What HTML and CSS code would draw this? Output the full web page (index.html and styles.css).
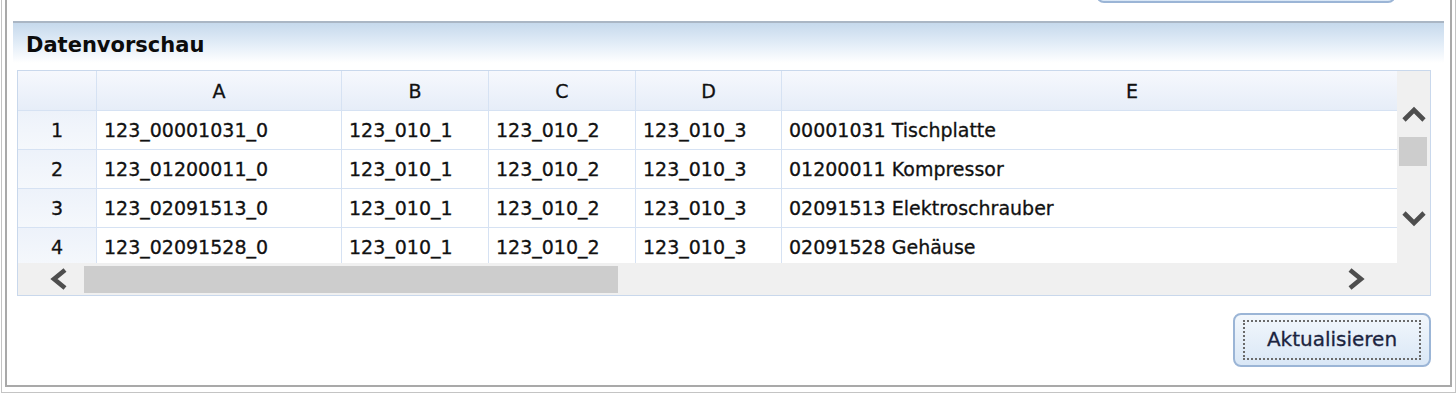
FILE: index.html
```html
<!DOCTYPE html>
<html lang="de">
<head>
  <meta charset="UTF-8" />
  <title>Datenvorschau</title>
  <link rel="stylesheet" href="styles.css">
</head>
<body>

  <div class="window">
    <div class="panel">

      <div class="top-row">
        <button class="btn btn-top" type="button"></button>
      </div>

      <section class="preview">
        <h2 class="preview-title">Datenvorschau</h2>

        <div class="sheet">
          <div class="sheet-view">
            <div class="grid">
              <div class="cell head corner"></div>
              <div class="cell head">A</div>
              <div class="cell head">B</div>
              <div class="cell head">C</div>
              <div class="cell head">D</div>
              <div class="cell head">E</div>

              <div class="cell row-no">1</div>
              <div class="cell">123_00001031_0</div>
              <div class="cell">123_010_1</div>
              <div class="cell">123_010_2</div>
              <div class="cell">123_010_3</div>
              <div class="cell">00001031 Tischplatte</div>

              <div class="cell row-no">2</div>
              <div class="cell">123_01200011_0</div>
              <div class="cell">123_010_1</div>
              <div class="cell">123_010_2</div>
              <div class="cell">123_010_3</div>
              <div class="cell">01200011 Kompressor</div>

              <div class="cell row-no">3</div>
              <div class="cell">123_02091513_0</div>
              <div class="cell">123_010_1</div>
              <div class="cell">123_010_2</div>
              <div class="cell">123_010_3</div>
              <div class="cell">02091513 Elektroschrauber</div>

              <div class="cell row-no">4</div>
              <div class="cell">123_02091528_0</div>
              <div class="cell">123_010_1</div>
              <div class="cell">123_010_2</div>
              <div class="cell">123_010_3</div>
              <div class="cell">02091528 Gehäuse</div>
            </div>
          </div>

          <!-- vertical scrollbar -->
          <div class="vscroll">
            <svg class="arrow-v" width="26" height="18" viewBox="0 0 26 18">
              <polyline points="3,15 13,5 23,15" />
            </svg>
            <div class="vthumb"></div>
            <svg class="arrow-v down" width="26" height="18" viewBox="0 0 26 18">
              <polyline points="3,3 13,13 23,3" />
            </svg>
          </div>

          <!-- horizontal scrollbar -->
          <div class="hscroll">
            <svg class="arrow-h" width="20" height="22" viewBox="0 0 20 22">
              <polyline points="16,2 5,11 16,20" />
            </svg>
            <div class="hthumb"></div>
            <div class="hspace"></div>
            <svg class="arrow-h" width="20" height="22" viewBox="0 0 20 22">
              <polyline points="4,2 15,11 4,20" />
            </svg>
          </div>
          <div class="scroll-corner"></div>
        </div>

        <div class="actions">
          <button class="btn btn-refresh" type="button"><span class="focus">Aktualisieren</span></button>
        </div>
      </section>

    </div>
  </div>

</body>
</html>
```

FILE: styles.css
```css
body {
  margin: 0;
  background: #fff;
  font-family: "DejaVu Sans", Verdana, sans-serif;
  font-size: 19px;
  color: #111;
  overflow: hidden;
}

.window {
  margin: -60px 0 0 1px;
  height: 453px;
  box-sizing: border-box;
  border: 1px solid #c4c4c4;
  padding: 3px 3px 5px;
}

.panel {
  height: 100%;
  box-sizing: border-box;
  border: 2px solid #a9a9a9;
}

.top-row {
  display: flex;
  justify-content: flex-end;
  height: 75px;
  padding-right: 54px;
}

.btn {
  font-family: inherit;
  font-size: 19px;
  color: #1b2440;
  border: 2px solid #9bb5d6;
  border-radius: 8px;
  background: linear-gradient(#f2f7fc, #d9e7f6);
  padding: 0;
  cursor: default;
}

.btn-top {
  width: 300px;
  height: 40px;
  margin-top: 17px;
}

/* Datenvorschau section */
.preview {
  margin: 0 6px;
  padding: 0 13px 0 4px;
  border-top: 2px solid #aab6c4;
}

.preview-title {
  margin: 0 -13px 7px -4px;
  height: 40px;
  padding-left: 13px;
  font-size: 21px;
  font-weight: bold;
  line-height: 45px;
  color: #0c0c0c;
  background: linear-gradient(#c6d9ec, #e4eef8 55%, #ffffff);
}

/* spreadsheet preview */
.sheet {
  display: grid;
  grid-template-columns: 1fr 33px;
  grid-template-rows: 192px 32px;
  border: 1px solid #c9d8ec;
  background: #fff;
}

.sheet-view {
  overflow: hidden;
}

.grid {
  display: grid;
  grid-template-columns: 79px 245px 147px 147px 146px 700px;
  grid-template-rows: 40px;
  grid-auto-rows: 39px;
}

.cell {
  box-sizing: border-box;
  border-right: 1px solid #d6e2f3;
  border-bottom: 1px solid #d6e2f3;
  padding: 0 7px;
  display: flex;
  align-items: center;
  white-space: nowrap;
  -webkit-text-stroke: 0.3px #111;
}

.cell:nth-child(6n) {
  border-right: none;
}

.head {
  justify-content: center;
  background: linear-gradient(#f6f8fd, #e6edf8);
}

.row-no {
  justify-content: center;
  background: linear-gradient(#edf2fa, #f5f8fc);
}

.vscroll {
  grid-row: 1;
  grid-column: 2;
  background: #f0f0f0;
  display: flex;
  flex-direction: column;
  align-items: center;
  padding-top: 34px;
}

.vthumb {
  width: 28px;
  height: 29px;
  margin: 14px 1px 0 0;
  background: #cdcdcd;
}

.arrow-v.down {
  margin-top: 44px;
}

.hscroll {
  display: flex;
  align-items: center;
  padding: 0 31px 0 31px;
  background: #f0f0f0;
}

.hthumb {
  width: 534px;
  height: 27px;
  margin-left: 15px;
  background: #cdcdcd;
}

.hspace {
  flex: 1;
}

.arrow-v polyline,
.arrow-h polyline {
  fill: none;
  stroke: #4e4e4e;
  stroke-width: 4.6;
  stroke-linejoin: miter;
}

.scroll-corner {
  background: #f0f0f0;
}

.actions {
  display: flex;
  justify-content: flex-end;
  padding-top: 17px;
}

.btn-refresh {
  width: 198px;
  height: 54px;
  padding: 5px 8px;
  font-size: 20px;
  -webkit-text-stroke: 0.3px #1b2440;
}

.btn-refresh .focus {
  display: flex;
  align-items: center;
  justify-content: center;
  height: 100%;
  box-sizing: border-box;
  border: 2px dotted #6a6a6a;
  padding-bottom: 2px;
}
```
